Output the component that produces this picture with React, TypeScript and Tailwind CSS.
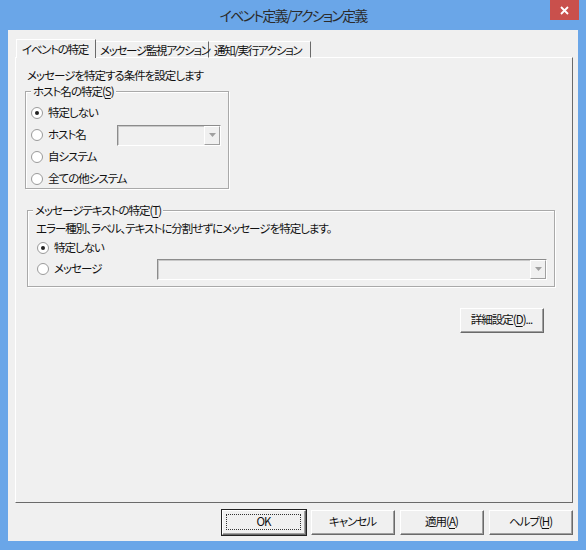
import React from "react";

const font = "font-['Noto_Sans_CJK_JP',sans-serif] [font-feature-settings:'palt'] whitespace-nowrap";
const txt = "text-[11.5px] tracking-[-1px] text-[#111]";

const Mn = ({ c }: { c: string }) => <span className="underline underline-offset-2">{c}</span>;

const Radio = ({ checked, label }: { checked?: boolean; label: string }) => (
  <div className="flex items-center h-[22px]">
    <span className="relative w-[12px] h-[12px] rounded-full border border-[#9a9a9a] bg-white flex items-center justify-center">
      {checked && <span className="w-[4px] h-[4px] rounded-full bg-[#222]" />}
    </span>
    <span className={`ml-[5px] ${txt}`}>{label}</span>
  </div>
);

const Combo = ({ w }: { w: string }) => (
  <div className={`${w} h-[21px] flex border-t border-l border-[#8c8c8c] border-b border-r border-b-white border-r-white bg-[#f0f0f0]`}>
    <div className="flex-1 border-t border-l border-[#c8c8c8]" />
    <div className="w-[16px] flex items-center justify-center border-t border-l border-white border-r border-b border-r-[#a0a0a0] border-b-[#a0a0a0] bg-[#f0f0f0]">
      <svg width="7" height="4" viewBox="0 0 7 4">
        <path d="M0 0h7L3.5 4z" fill="#a0a0a0" />
      </svg>
    </div>
  </div>
);

const Btn = ({ children, def }: { children: React.ReactNode; def?: boolean }) => (
  <div
    className={`w-[84px] h-[25px] flex items-center justify-center ${txt} bg-[#f0f0f0] border border-t-white border-l-white border-r-[#6a6a6a] border-b-[#6a6a6a] ${
      def ? "outline outline-1 outline-[#222]" : ""
    }`}
  >
    <div className={`w-full h-full flex items-center justify-center border-r border-b border-[#a0a0a0] ${def ? "p-[3px]" : ""}`}>
      {def ? (
        <div className="w-full h-full flex items-center justify-center border border-dotted border-[#333]">{children}</div>
      ) : (
        children
      )}
    </div>
  </div>
);

const Group = ({ title, className, children }: { title: React.ReactNode; className: string; children: React.ReactNode }) => (
  <div className={`relative border border-[#a9a9a9] shadow-[inset_1px_1px_0_#fff,1px_1px_0_#fff] ${className}`}>
    <div className={`absolute -top-[8px] left-[5px] px-[2px] bg-[#f0f0f0] leading-[14px] ${txt}`}>{title}</div>
    {children}
  </div>
);

export default function App() {
  return (
    <div className={`w-[586px] h-[550px] bg-[#6aa6e8] flex flex-col ${font}`}>
      <div className="relative h-[30px] flex items-center justify-center">
        <span className="text-[14px] tracking-[-1.8px] text-[#2b2b2b] mt-[1px]">イベント定義/アクション定義</span>
        <div className="absolute top-0 right-[7px] w-[29px] h-[20px] bg-[#c9504c] flex items-center justify-center">
          <svg width="9" height="9" viewBox="0 0 9 9">
            <path d="M1 1l7 7M8 1L1 8" stroke="#fff" strokeWidth="1.8" />
          </svg>
        </div>
      </div>
      <div className="ml-[8px] w-[570px] h-[511px] bg-[#f0f0f0] flex flex-col">
        <div className="flex items-end ml-[8px] mt-[9px] h-[19px] relative z-10 text-[11.5px] tracking-[-1.3px] leading-[14px] text-[#111]">
          <div className="w-[80px] h-[19px] px-[5px] pt-[2px] bg-[#f0f0f0] border-t border-l border-white border-r border-r-[#6a6a6a]">
            イベントの特定
          </div>
          <div className="w-[113px] h-[17px] pl-[4px] pt-[1px] border-t border-white border-r border-r-[#6a6a6a] border-b border-b-white">
            メッセージ監視アクション
          </div>
          <div className="w-[102px] h-[17px] pl-[5px] pt-[1px] border-t border-white border-r border-r-[#6a6a6a] border-b border-b-white">
            通知/実行アクション
          </div>
        </div>
        <div className="ml-[7px] -mt-[1px] w-[558px] h-[446px] border-t border-l border-white border-r border-b border-r-[#6a6a6a] border-b-[#6a6a6a] flex flex-col">
          <div className={`ml-[11px] mt-[10px] leading-[14px] ${txt}`}>メッセージを特定する条件を設定します</div>
          <Group
            className="ml-[9px] mt-[9px] w-[204px] h-[98px] pl-[5px] pt-[10px]"
            title={
              <>
                ホスト名の特定(<Mn c="S" />)
              </>
            }
          >
            <Radio checked label="特定しない" />
            <div className="flex items-center">
              <div className="w-[86px]">
                <Radio label="ホスト名" />
              </div>
              <Combo w="w-[104px]" />
            </div>
            <Radio label="自システム" />
            <Radio label="全ての他システム" />
          </Group>
          <Group
            className="ml-[11px] mt-[21px] w-[528px] h-[77px] pl-[9px] pt-[10px]"
            title={
              <>
                メッセージテキストの特定(<Mn c="T" />)
              </>
            }
          >
            <div className={`ml-[-1px] leading-[14px] mb-[2px] ${txt}`}>エラー種別、ラベル、テキストに分割せずにメッセージを特定します。</div>
            <Radio checked label="特定しない" />
            <div className="flex items-center -mt-[1px]">
              <div className="w-[120px]">
                <Radio label="メッセージ" />
              </div>
              <Combo w="w-[390px]" />
            </div>
          </Group>
          <div className="flex justify-end mr-[28px] mt-[21px]">
            <Btn>
              詳細設定(<Mn c="D" />)...
            </Btn>
          </div>
        </div>
        <div className="flex justify-end gap-[5px] mr-[5px] mt-[7px]">
          <Btn def>OK</Btn>
          <Btn>キャンセル</Btn>
          <Btn>
            適用(<Mn c="A" />)
          </Btn>
          <Btn>
            ヘルプ(<Mn c="H" />)
          </Btn>
        </div>
      </div>
    </div>
  );
}
